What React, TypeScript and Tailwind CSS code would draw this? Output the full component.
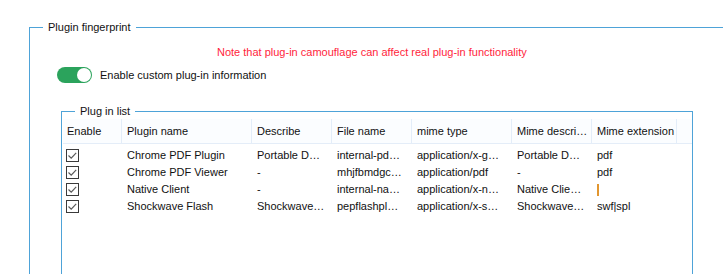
import React from 'react';

const cols = [
  { label: 'Enable', w: 'w-[59px]', pl: 'pl-[4px]' },
  { label: 'Plugin name', w: 'w-[130px]', pl: 'pl-[5px]' },
  { label: 'Describe', w: 'w-[80px]', pl: 'pl-[5px]' },
  { label: 'File name', w: 'w-[80px]', pl: 'pl-[5px]' },
  { label: 'mime type', w: 'w-[100px]', pl: 'pl-[5px]' },
  { label: 'Mime descri…', w: 'w-[80px]', pl: 'pl-[5px]' },
  { label: 'Mime extension', w: 'w-[85px]', pl: 'pl-[5px]' },
];

const rows = [
  ['Chrome PDF Plugin', 'Portable D…', 'internal-pd…', 'application/x-g…', 'Portable D…', 'pdf'],
  ['Chrome PDF Viewer', '-', 'mhjfbmdgc…', 'application/pdf', '-', 'pdf'],
  ['Native Client', '-', 'internal-na…', 'application/x-n…', 'Native Clie…', ''],
  ['Shockwave Flash', 'Shockwave…', 'pepflashpl…', 'application/x-s…', 'Shockwave…', 'swf|spl'],
];

function Check() {
  return (
    <svg width="13" height="13" viewBox="0 0 13 13">
      <rect x="0.5" y="0.5" width="12" height="12" fill="#fff" stroke="#3a3a3a" />
      <polyline points="2.5,6.5 5.2,9.2 10.2,3.8" fill="none" stroke="#5a5a5a" strokeWidth="1.2" />
    </svg>
  );
}

export default function App() {
  return (
    <div className="h-[274px] w-[723px] overflow-hidden bg-white pt-[20px] font-['Liberation_Sans',Arial,sans-serif] text-[11px] text-[#111]">
      <fieldset className="ml-[29px] h-[300px] w-[720px] border border-[#4ea3d8] p-0">
        <legend className="ml-[13px] px-[5px] leading-[14px]">Plugin fingerprint</legend>

        <p className="pl-[187px] pt-[11px] leading-[14px] text-[#ff1e3c]">
          Note that plug-in camouflage can affect real plug-in functionality
        </p>

        <div className="mt-[8px] flex items-center pl-[27px]">
          <div className="flex h-[16px] w-[35px] items-center justify-end rounded-full bg-[#2ba35c] pr-[1px]">
            <div className="h-[14px] w-[14px] rounded-full bg-white" />
          </div>
          <span className="ml-[8px] leading-[16px]">Enable custom plug-in information</span>
        </div>

        <fieldset className="ml-[31px] mt-[21px] h-[200px] w-[632px] border border-[#4ea3d8] p-0">
          <legend className="ml-[13px] px-[5px] leading-[14px]">Plug in list</legend>

          <div className="pl-[1px] pt-[1px]">
            <div className="flex h-[25px] border-b border-[#e4edf8] bg-[#fbfdff]">
              {cols.map((c) => (
                <div key={c.label} className={`${c.w} ${c.pl} flex items-center border-r border-[#e3edf9]`}>
                  {c.label}
                </div>
              ))}
            </div>

            <div className="pt-[3px]">
              {rows.map((r, i) => (
                <div key={i} className="flex h-[17px] items-center">
                  <div className="w-[59px] pl-[3px]">
                    <Check />
                  </div>
                  {r.map((cell, j) => (
                    <div key={j} className={`${cols[j + 1].w} ${cols[j + 1].pl} whitespace-nowrap`}>
                      {i === 2 && j === 5 ? (
                        <span className="inline-block h-[12px] w-[2px] bg-[#e2962f] align-middle" />
                      ) : (
                        cell
                      )}
                    </div>
                  ))}
                </div>
              ))}
            </div>
          </div>
        </fieldset>
      </fieldset>
    </div>
  );
}
